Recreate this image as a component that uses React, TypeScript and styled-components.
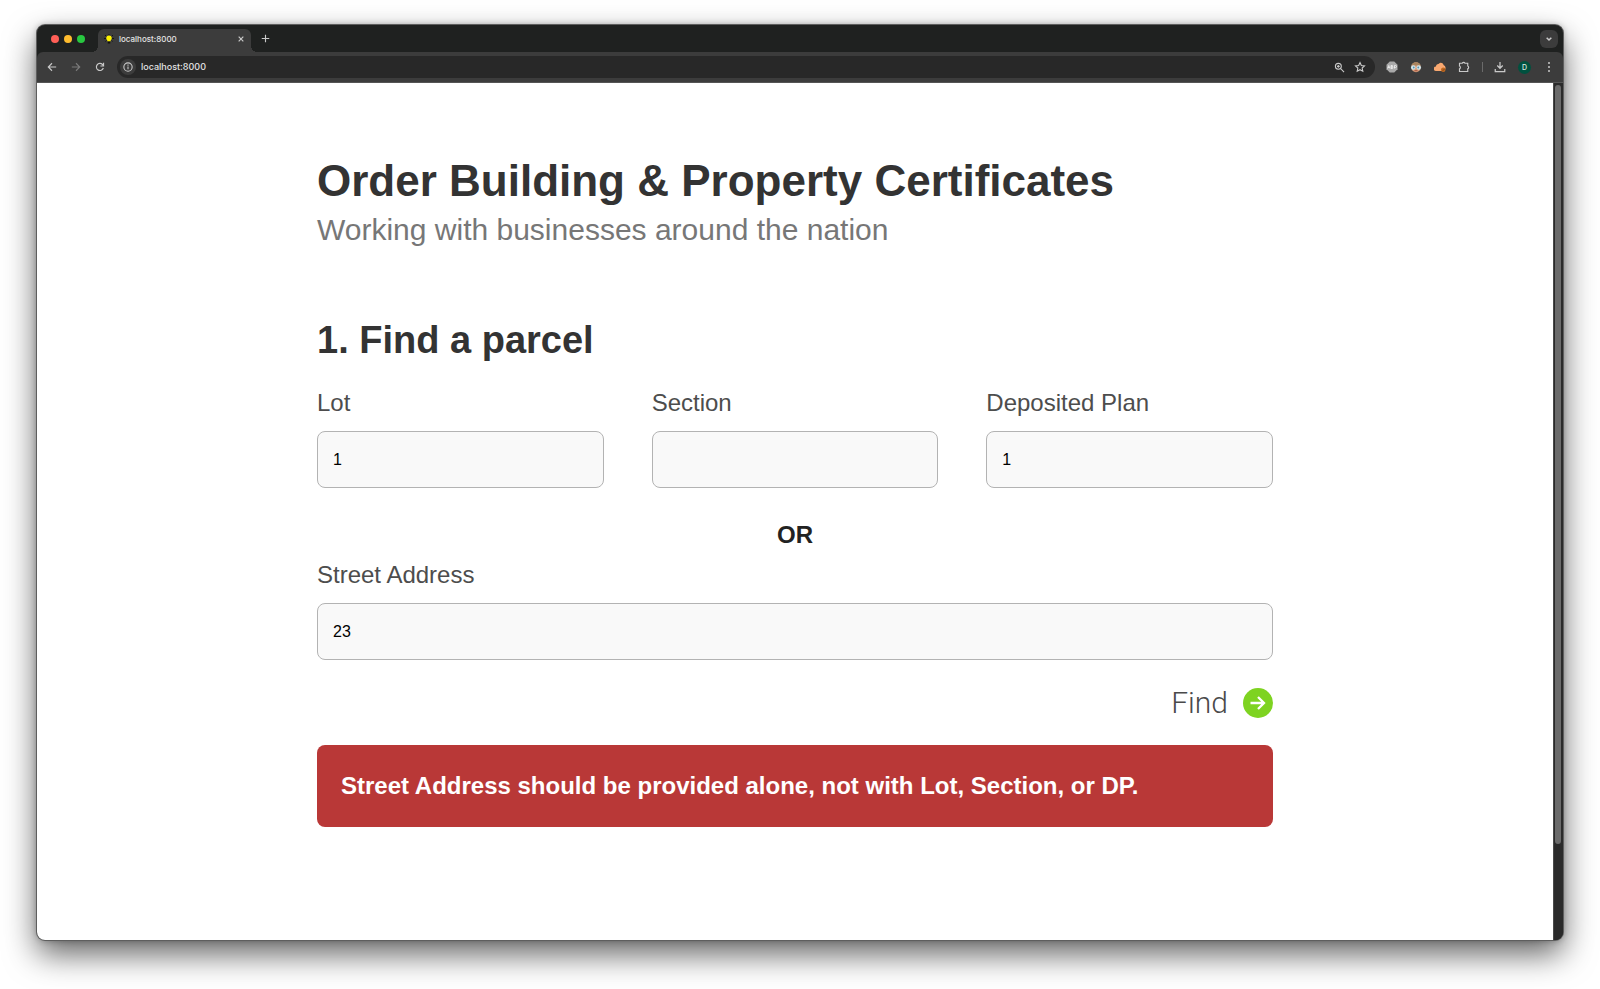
import React, { useId } from "react";
import styled, { createGlobalStyle } from "styled-components";

const GlobalStyle = createGlobalStyle`
  *, *::before, *::after { box-sizing: border-box; }
  body {
    margin: 0;
    background: #fff;
    font-family: "Liberation Sans", Arial, sans-serif;
  }
  h1, h2, p { margin: 0; }
  button { border: 0; padding: 0; background: none; color: inherit; font: inherit; cursor: pointer; }
`;

const Desktop = styled.div`
  display: flex;
  min-height: 100vh;
  padding: 25px 37px 49px;
`;

const BrowserWindow = styled.div`
  flex: 1;
  min-width: 0;
  display: flex;
  flex-direction: column;
  border-radius: 8px;
  overflow: hidden;
  background: #1f2120;
  box-shadow:
    0 0 0 1px #5e5e5e,
    0 0 6px rgba(0, 0, 0, 0.3),
    0 14px 32px rgba(0, 0, 0, 0.62);
`;

const TabStrip = styled.div`
  display: flex;
  align-items: center;
  height: 27px;
  padding: 0 5px 0 14px;
`;

const TrafficLights = styled.div`
  display: flex;
  gap: 5px;
  margin-right: 13px;
`;

const Light = styled.span<{ $color: string }>`
  width: 8px;
  height: 8px;
  border-radius: 50%;
  background: ${(p) => p.$color};
`;

const Tab = styled.div`
  position: relative;
  align-self: flex-end;
  display: flex;
  align-items: center;
  gap: 5px;
  width: 153px;
  height: 23px;
  padding: 0 5px 4px 6px;
  border-radius: 6px 6px 0 0;
  background: #3c3c3c;
  color: #e3e3e3;
  font: 500 8px/12px Inter, sans-serif;

  &::before,
  &::after {
    content: "";
    position: absolute;
    bottom: 0;
    width: 6px;
    height: 6px;
  }
  &::before {
    right: 100%;
    background: radial-gradient(circle at 0 0, transparent 6px, #3c3c3c 6px);
  }
  &::after {
    left: 100%;
    background: radial-gradient(circle at 100% 0, transparent 6px, #3c3c3c 6px);
  }
`;

const TabTitle = styled.span`
  flex: 1;
`;

const IconButton = styled.button<{ $size?: number; $muted?: boolean }>`
  display: flex;
  flex: none;
  align-items: center;
  justify-content: center;
  width: ${(p) => p.$size ?? 12}px;
  height: ${(p) => p.$size ?? 12}px;
  color: ${(p) => (p.$muted ? "#7b7b7b" : "#c9c9c9")};
`;

const NewTabButton = styled(IconButton)`
  margin: 0 auto 0 8px;
`;

const TabSearchButton = styled(IconButton)`
  border-radius: 6px;
  background: #3c3c3c;
`;

const Toolbar = styled.div`
  display: flex;
  align-items: center;
  height: 31px;
  padding: 0 8px 0 9px;
  border-bottom: 1px solid #555;
  border-radius: 6px 6px 0 0;
  background: #3c3c3c;
`;

const NavButtons = styled.div`
  display: flex;
  gap: 12px;
  margin-right: 11px;
`;

const AddressBar = styled.div`
  flex: 1;
  min-width: 0;
  display: flex;
  align-items: center;
  gap: 9px;
  height: 22px;
  padding: 0 9px 0 3px;
  border-radius: 11px;
  background: #282828;
`;

const SiteInfoButton = styled(IconButton)`
  border-radius: 50%;
  background: #3c3c3c;
`;

const AddressInput = styled.input`
  flex: 1;
  min-width: 0;
  margin-left: -4px;
  padding: 0;
  border: 0;
  outline: 0;
  background: none;
  color: #e3e3e3;
  font: 500 9px/14px Inter, sans-serif;
`;

const Extensions = styled.div`
  display: flex;
  align-items: center;
  gap: 12px;
  margin-left: 11px;
`;

const Divider = styled.span`
  width: 1px;
  height: 10px;
  background: #6a6a6a;
`;

const Avatar = styled.button`
  width: 13px;
  height: 13px;
  border-radius: 50%;
  background: #00513f;
  color: #d8e8e2;
  font: 500 7px/13px Inter, sans-serif;
`;

const Viewport = styled.div`
  flex: 1;
  display: flex;
`;

const Page = styled.main`
  flex: 1;
  min-width: 0;
  padding: 72px 24px 112px;
  background: #fff;
`;

const ScrollTrack = styled.div`
  width: 10px;
  padding: 2px 2px 2px 1px;
  border-left: 1px solid #4a4a4a;
  background: #2a2a2a;
`;

const ScrollThumb = styled.div`
  height: 89%;
  border-radius: 4px;
  background: #6b6b6b;
`;

const Container = styled.div`
  max-width: 956px;
  margin: 0 auto;
`;

const Title = styled.h1`
  color: #333;
  font-size: 44px;
  line-height: 52px;
`;

const Subtitle = styled.p`
  margin-top: 5px;
  color: #777;
  font-size: 30px;
  line-height: 36px;
`;

const StepTitle = styled.h2`
  margin: 70px 0 27px;
  color: #333;
  font-size: 38px;
  line-height: 44px;
`;

const FieldRow = styled.div`
  display: grid;
  grid-template-columns: repeat(3, minmax(0, 1fr));
  gap: 48px;
`;

const FieldBox = styled.div`
  display: flex;
  flex-direction: column;
  gap: 14px;
`;

const Label = styled.label`
  color: #4d4d4d;
  font-size: 24px;
  line-height: 28px;
`;

const TextInput = styled.input`
  width: 100%;
  height: 57px;
  padding: 0 15px;
  border: 1px solid #b3b3b3;
  border-radius: 8px;
  background: #f9f9f9;
  color: #000;
  font: 16px/20px "Liberation Sans", Arial, sans-serif;
`;

const OrText = styled.p`
  margin: 33px 0 12px;
  color: #222;
  font-size: 24px;
  font-weight: 700;
  line-height: 28px;
  text-align: center;
`;

const Actions = styled.div`
  display: flex;
  justify-content: flex-end;
  margin: 28px 0 27px;
`;

const FindButton = styled.button`
  display: flex;
  align-items: center;
  gap: 15px;
  color: #4a4a4a;
  font: 300 30px/30px Roboto, sans-serif;
`;

const ErrorBanner = styled.div`
  padding: 27px 24px;
  border-radius: 8px;
  background: #b93837;
  color: #fff;
  font-size: 24px;
  font-weight: 700;
  line-height: 28px;
`;

type StrokeProps = { size: number; d: string; width?: number };

const Stroke = ({ size, d, width = 2 }: StrokeProps) => (
  <svg width={size} height={size} viewBox="0 0 24 24" fill="none" stroke="currentColor" strokeWidth={width} aria-hidden="true">
    <path d={d} />
  </svg>
);

const BulbIcon = () => (
  <svg width="10" height="10" viewBox="0 0 20 20" aria-hidden="true">
    <path d="M10 0v3M2 2l3 3M18 2l-3 3M0 9h4M20 9h-4M3 15l2-2M17 15l-2-2" stroke="#111" strokeWidth="1.800" />
    <path d="M10 3a5.500 5.500 0 0 0-5.500 5.500c0 2.500 2 3.500 3 6.500h5c1-3 3-4 3-6.500A5.500 5.500 0 0 0 10 3z" fill="#fdf100" />
    <path d="M7.500 15h5v4h-5z" fill="#111" />
  </svg>
);

const AdblockIcon = () => (
  <svg width="12" height="12" viewBox="0 0 24 24" aria-hidden="true">
    <path d="M7.500 1h9L23 7.500v9L16.500 23h-9L1 16.500v-9z" fill="#a9a9a9" />
    <path d="M3 15l2.500-6L8 15M4 13h3M10 9v6h2.500a1.500 1.500 0 0 0 0-3H10h2a1.500 1.500 0 0 0 0-3zM17 15V9h2a2 2 0 0 1 0 4h-2" fill="none" stroke="#f2f2f2" strokeWidth="1.600" />
  </svg>
);

const FaceIcon = () => (
  <svg width="12" height="12" viewBox="0 0 24 24" aria-hidden="true">
    <ellipse cx="12" cy="12.500" rx="9.500" ry="10" fill="#d99f7c" />
    <path d="M2.500 9C4 4 8 2.500 12 2.500s8 1.500 9.500 6.500z" fill="#a8845f" />
    <circle cx="6.500" cy="13" r="4.500" fill="#cfe6ee" />
    <circle cx="17.500" cy="13" r="4.500" fill="#cfe6ee" />
    <circle cx="7.500" cy="13" r="1.800" fill="#5b94ab" />
    <circle cx="16.500" cy="13" r="1.800" fill="#5b94ab" />
    <path d="M9 19.500h6" stroke="#a04f3b" strokeWidth="2" />
  </svg>
);

const CloudIcon = () => (
  <svg width="12" height="12" viewBox="0 0 24 24" aria-hidden="true">
    <path d="M4 20a4.500 4.500 0 0 1 0-9 5 5 0 0 1 5-5 5.500 5.500 0 0 1 4-2.500 6 6 0 0 1 6.500 5A5.500 5.500 0 0 1 21 18l-2 2z" fill="#f9a870" />
    <circle cx="18.500" cy="17.500" r="4.500" fill="#c0691f" />
    <path d="M16.500 17.500l1.500 1.500 3-3" fill="none" stroke="#6d3510" strokeWidth="1.500" />
  </svg>
);

const MoreIcon = () => (
  <svg width="12" height="12" viewBox="0 0 24 24" fill="currentColor" aria-hidden="true">
    <circle cx="12" cy="4" r="2" />
    <circle cx="12" cy="12" r="2" />
    <circle cx="12" cy="20" r="2" />
  </svg>
);

const ArrowCircle = () => (
  <svg width="30" height="30" viewBox="0 0 30 30" aria-hidden="true">
    <circle cx="15" cy="15" r="15" fill="#7ed321" />
    <path d="M7.500 15H21M15 9l6 6-6 6" fill="none" stroke="#fff" strokeWidth="2.300" />
  </svg>
);

const Field = ({ label, value }: { label: string; value: string }) => {
  const id = useId();
  return (
    <FieldBox>
      <Label htmlFor={id}>{label}</Label>
      <TextInput id={id} type="text" defaultValue={value} />
    </FieldBox>
  );
};

const BrowserChrome = () => (
  <>
    <TabStrip>
      <TrafficLights>
        <Light $color="#ff5f57" />
        <Light $color="#febc2e" />
        <Light $color="#28c840" />
      </TrafficLights>
      <Tab>
        <BulbIcon />
        <TabTitle>localhost:8000</TabTitle>
        <IconButton $size={10} aria-label="Close tab">
          <Stroke size={8} d="M5 5l14 14M19 5L5 19" width={3.5} />
        </IconButton>
      </Tab>
      <NewTabButton aria-label="New tab">
        <Stroke size={9} d="M12 2v20M2 12h20" width={3} />
      </NewTabButton>
      <TabSearchButton $size={18} aria-label="Search tabs">
        <Stroke size={8} d="M5 8l7 7 7-7" width={4.5} />
      </TabSearchButton>
    </TabStrip>
    <Toolbar>
      <NavButtons>
        <IconButton aria-label="Back">
          <Stroke size={10} d="M22 12H4M12 3l-9 9 9 9" width={2.6} />
        </IconButton>
        <IconButton $muted aria-label="Forward">
          <Stroke size={10} d="M2 12h18M12 3l9 9-9 9" width={2.6} />
        </IconButton>
        <IconButton aria-label="Reload">
          <Stroke size={10} d="M20 14.500A8.500 8.500 0 1 1 18 6l2 2.500M20.500 2v7.500H13" width={2.8} />
        </IconButton>
      </NavButtons>
      <AddressBar>
        <SiteInfoButton $size={16} aria-label="Site information">
          <Stroke size={10} d="M12 2a10 10 0 1 0 0 20 10 10 0 0 0 0-20M12 11v6.500M12 6v3" width={2.6} />
        </SiteInfoButton>
        <AddressInput aria-label="Address" defaultValue="localhost:8000" />
        <IconButton aria-label="Zoom">
          <Stroke size={11} d="M9.500 3a6.500 6.500 0 1 0 0 13 6.500 6.500 0 0 0 0-13M14.500 14.500L22 22M9.500 6.500v6M6.500 9.500h6" width={2.3} />
        </IconButton>
        <IconButton aria-label="Bookmark">
          <Stroke size={12} d="M12 3l2.700 6 6.300.7-4.700 4.400 1.300 6.400-5.600-3.200-5.600 3.200 1.300-6.400L3 9.700 9.300 9z" width={2.2} />
        </IconButton>
      </AddressBar>
      <Extensions>
        <IconButton aria-label="Ad blocker"><AdblockIcon /></IconButton>
        <IconButton aria-label="Reader"><FaceIcon /></IconButton>
        <IconButton aria-label="Cloud"><CloudIcon /></IconButton>
        <IconButton aria-label="Extensions">
          <Stroke size={12} d="M3 4.500h5.500a3 3 0 0 1 5.500 0h5.500V10a3 3 0 0 1 0 5.500V21H3v-5.500a3 3 0 0 0 0-5.500z" width={2.3} />
        </IconButton>
        <Divider />
      </Extensions>
      <Extensions>
        <IconButton aria-label="Downloads">
          <Stroke size={12} d="M12 2v12M6.500 9l5.500 5.500L17.500 9M2.500 16v5h19v-5" width={2.5} />
        </IconButton>
        <Avatar aria-label="Profile">D</Avatar>
        <IconButton aria-label="More"><MoreIcon /></IconButton>
      </Extensions>
    </Toolbar>
  </>
);

const OrderPage = () => (
  <Page>
    <Container>
      <Title>Order Building &amp; Property Certificates</Title>
      <Subtitle>Working with businesses around the nation</Subtitle>
      <StepTitle>1. Find a parcel</StepTitle>
      <form onSubmit={(e) => e.preventDefault()}>
        <FieldRow>
          <Field label="Lot" value="1" />
          <Field label="Section" value="" />
          <Field label="Deposited Plan" value="1" />
        </FieldRow>
        <OrText>OR</OrText>
        <Field label="Street Address" value="23" />
        <Actions>
          <FindButton type="submit">
            Find
            <ArrowCircle />
          </FindButton>
        </Actions>
      </form>
      <ErrorBanner role="alert">Street Address should be provided alone, not with Lot, Section, or DP.</ErrorBanner>
    </Container>
  </Page>
);

export default function App() {
  return (
    <>
      <GlobalStyle />
      <Desktop>
        <BrowserWindow>
          <BrowserChrome />
          <Viewport>
            <OrderPage />
            <ScrollTrack>
              <ScrollThumb />
            </ScrollTrack>
          </Viewport>
        </BrowserWindow>
      </Desktop>
    </>
  );
}
